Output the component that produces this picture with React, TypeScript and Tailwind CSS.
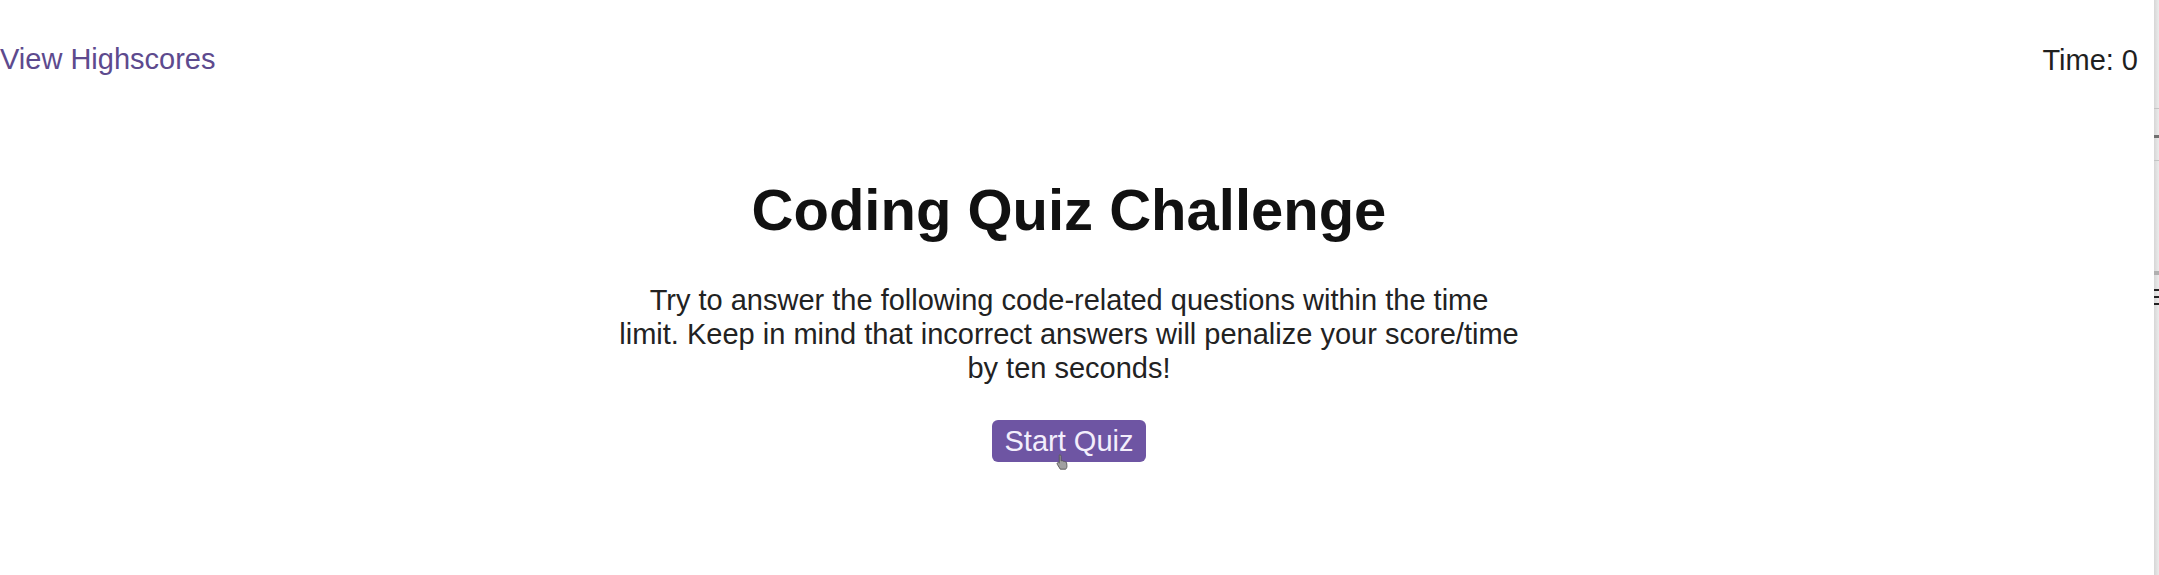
import React from "react";

export default function App() {
  return (
    <div
      className="relative w-[2159px] h-[575px] bg-white overflow-hidden"
      style={{ fontFamily: '"Liberation Sans", Arial, Helvetica, sans-serif' }}
    >
      <div className="w-[2138px] flex flex-col">
        <header className="flex justify-between pt-[43px] text-[29px] leading-[32px]">
          <a className="text-[#5d4a8e] cursor-pointer">View Highscores</a>
          <span className="text-[#1f1f1f] pt-[1px]">Time: 0</span>
        </header>
        <main className="flex flex-col items-center">
          <h1 className="mt-[102px] text-[58px] leading-[64px] font-bold text-[#111111]">
            Coding Quiz Challenge
          </h1>
          <p className="mt-[41px] w-[1000px] text-center text-[29px] leading-[34px] text-[#222222]">
            Try to answer the following code-related questions within the time
            <br />
            limit. Keep in mind that incorrect answers will penalize your score/time
            <br />
            by ten seconds!
          </p>
          <div className="relative mt-[35px]">
            <button className="h-[42px] px-[13px] rounded-[6px] bg-[#6e55a3] text-[#f3eefc] text-[29px] leading-[32px]">
              Start Quiz
            </button>
            <svg
              className="absolute left-[62px] top-[33px]"
              width="18"
              height="18"
              viewBox="0 0 16 16"
            >
              <path
                d="M5 1.5c.8 0 1.3.6 1.3 1.3V7l.4-.1c.6-.3 1.3 0 1.5.5l.2-.1c.6-.2 1.2.1 1.4.6.6-.2 1.3.2 1.4.8l.3 2.6c.1 1.2-.3 2.3-1.1 3.1H5.6L3 10.2c-.4-.6-.3-1.3.2-1.6.5-.4 1.1-.2 1.4.2l.1.2V2.8c0-.7.1-1.3.3-1.3z"
                fill="#a0a0a0"
                stroke="#555555"
                strokeWidth="0.8"
              />
            </svg>
          </div>
        </main>
      </div>
      <div className="absolute right-0 top-0 h-full w-[5px] flex flex-col bg-gradient-to-r from-[#d6d6d6] to-[#ececec]">
        <div className="h-[108px]" />
        <div className="h-[1px] bg-[#c4c4c4]" />
        <div className="h-[26px]" />
        <div className="h-[3px] bg-[#707070]" />
        <div className="h-[22px]" />
        <div className="h-[1px] bg-[#c4c4c4]" />
        <div className="h-[110px]" />
        <div className="h-[4px] bg-[#b0b0b0]" />
        <div className="h-[14px]" />
        <div className="h-[2px] bg-[#222222]" />
        <div className="h-[5px]" />
        <div className="h-[2px] bg-[#222222]" />
        <div className="h-[5px]" />
        <div className="h-[2px] bg-[#222222]" />
      </div>
    </div>
  );
}
